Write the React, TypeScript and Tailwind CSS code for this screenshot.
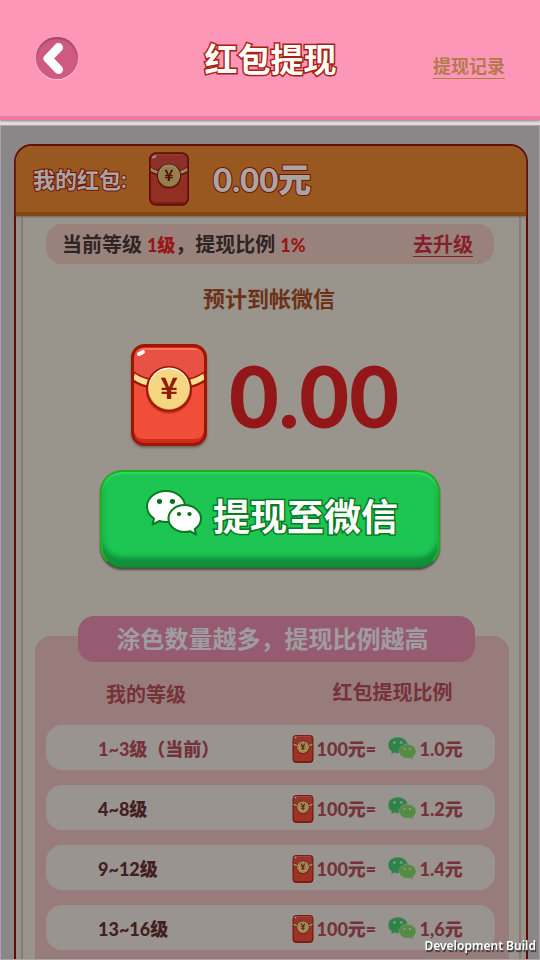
interface IconProps {
  className?: string;
}

interface WechatIconProps extends IconProps {
  back: string;
  front: string;
  eyes: string;
  outline: string;
  outlineWidth: number;
}

interface Tier {
  level: string;
  rate: string;
  current?: boolean;
}

const tiers: Tier[] = [
  { level: "1~3级（当前）", rate: "1.0元", current: true },
  { level: "4~8级", rate: "1.2元" },
  { level: "9~12级", rate: "1.4元" },
  { level: "13~16级", rate: "1,6元" },
];

function RedEnvelope({ className }: IconProps) {
  return (
    <svg viewBox="0 0 76 102" className={className} aria-hidden="true">
      <rect x="1.5" y="1.5" width="73" height="99" rx="12" fill="#cf2c1c" />
      <path d="M3 14Q3 4 13 4H63Q73 4 73 14V85Q73 95 63 95H13Q3 95 3 85Z" fill="#f04e39" />
      <path d="M3 14Q3 4 13 4H63Q73 4 73 14V29Q38 55 3 29Z" fill="#e85245" />
      <path d="M8 6Q10 4 14 4H62Q66 4 68 6Z" fill="#ff7263" />
      <path d="M3 37Q16 45 38 45Q60 45 73 37" fill="none" stroke="#9f1600" strokeWidth="3" />
      <path d="M3 32Q14 41 38 41Q62 41 73 32" fill="none" stroke="#fde193" strokeWidth="6" />
      <path d="M3 28Q14 37 38 37Q62 37 73 28" fill="none" stroke="#9f1600" strokeWidth="1.5" />
      <rect x="1.5" y="1.5" width="73" height="99" rx="12" fill="none" stroke="#9f1600" strokeWidth="3" />
      <path d="M8 10L12 8" stroke="#fff" strokeWidth="4" strokeLinecap="round" />
      <circle cx="38" cy="47" r="23" fill="#8d1a08" opacity="0.4" />
      <circle cx="38" cy="45" r="22" fill="#d08a31" stroke="#9f1600" strokeWidth="2" />
      <circle cx="38" cy="44" r="20.5" fill="#fff" />
      <circle cx="38" cy="45" r="20" fill="#f7d682" />
      <text
        x="38"
        y="55"
        textAnchor="middle"
        fontFamily="Noto Sans CJK SC, sans-serif"
        fontWeight="700"
        fontSize="30"
        fill="#8f1d08"
      >
        ¥
      </text>
    </svg>
  );
}

function WechatIcon({ className, back, front, eyes, outline, outlineWidth }: WechatIconProps) {
  return (
    <svg viewBox="0 0 58 48" className={className} aria-hidden="true">
      <g stroke={outline} strokeWidth={outlineWidth} strokeLinejoin="round">
        <path
          d="M21 2C10.500 2 2 9 2 17.500C2 22.500 4.500 26.500 9 29.500L7.500 35.500L14.500 32C16.500 32.700 18.700 33 21 33C31.500 33 40 26.200 40 17.500C40 9 31.500 2 21 2Z"
          fill={back}
        />
        <path
          d="M39.500 16C30.500 16 23.500 22 23.500 29.500C23.500 37 30.500 43 39.500 43C41.500 43 43.300 42.700 45 42.200L51 45.500L49.700 40C53.700 37.500 56 33.800 56 29.500C56 22 48.500 16 39.500 16Z"
          fill={front}
        />
      </g>
      <g fill={eyes}>
        <ellipse cx="14.500" cy="12.500" rx="2.600" ry="2.400" />
        <ellipse cx="27.500" cy="12.500" rx="2.600" ry="2.400" />
        <ellipse cx="34" cy="25" rx="2.200" ry="2" />
        <ellipse cx="44.500" cy="25" rx="2.200" ry="2" />
      </g>
    </svg>
  );
}

function Header() {
  return (
    <header className="relative z-10 shrink-0 border-b-4 border-[#ea7b9f] bg-[#fd97b8] shadow-[0_1px_2px_#8b8788]">
      <div className="grid h-[116px] grid-cols-[1fr_auto_1fr] items-center pr-[35px] pl-9">
        <button
          type="button"
          aria-label="返回"
          className="flex size-[42px] items-center justify-center rounded-full bg-[#ce5a83] shadow-[inset_0_2px_2px_#984966,0_1px_1px_#ffc4d6]"
        >
          <svg viewBox="0 0 42 42" className="size-full" aria-hidden="true">
            <path
              d="M22.500 10.500L12 21.500L22.500 32.500"
              fill="none"
              stroke="#fff"
              strokeWidth="9"
              strokeLinecap="round"
              strokeLinejoin="round"
            />
          </svg>
        </button>
        <h1 className="pt-1 text-[33px] font-bold text-white [-webkit-text-stroke:3px_#a8200f] [paint-order:stroke]">
          红包提现
        </h1>
        <a
          href="#records"
          className="mt-4 justify-self-end border-b border-[#b08045] text-lg leading-6 font-bold text-[#b5794f]"
        >
          提现记录
        </a>
      </div>
    </header>
  );
}

function BalanceBar() {
  return (
    <div className="relative flex h-[70px] items-center rounded-t-[16px] border-b-4 border-[#854610] bg-[#9a5821] pl-[17px] text-[#aaa5a5] shadow-[0_1px_2px_#6f6a66]">
      <span className="w-[116px] text-[22px] font-bold [-webkit-text-stroke:2px_#731404] [paint-order:stroke]">
        我的红包:
      </span>
      <RedEnvelope className="h-[54px] w-10 brightness-60" />
      <span className="pl-6 text-[33px] leading-10 font-black [-webkit-text-stroke:2px_#731404] [paint-order:stroke]">
        0.00元
      </span>
    </div>
  );
}

function LevelBar() {
  return (
    <div className="mt-2 mr-[25px] ml-[23px] flex h-10 items-center justify-between rounded-[16px] bg-[#98827b] pr-[21px] pl-4 text-xl font-bold text-[#2f2424]">
      <p>
        当前等级 <strong className="text-lg text-[#991616]">1级</strong>，提现比例{" "}
        <strong className="text-lg text-[#991616]">1%</strong>
      </p>
      <a href="#upgrade" className="border-b border-[#851f2b] leading-6 text-[#851f2b]">
        去升级
      </a>
    </div>
  );
}

function TierTable() {
  return (
    <table className="w-full table-fixed border-separate border-spacing-x-0 border-spacing-y-[15px] text-[#76323a]">
      <thead>
        <tr className="h-[33px] text-xl leading-6">
          <th scope="col" className="w-1/2 p-0 pl-[60px] text-left font-bold">
            我的等级
          </th>
          <th scope="col" className="w-1/2 p-0 pb-1 pl-[62px] text-left font-bold">
            红包提现比例
          </th>
        </tr>
      </thead>
      <tbody>
        {tiers.map((tier) => (
          <tr key={tier.level} className="h-[45px] text-lg leading-6 font-black">
            <td
              className={`rounded-l-[16px] bg-[#999490] p-0 pt-0.5 pl-[52px] ${tier.current ? "text-[#76323a]" : "text-[#432020]"}`}
            >
              {tier.level}
            </td>
            <td className="rounded-r-[16px] bg-[#999490] p-0 pt-0.5 pl-[21px]">
              <div className="flex items-center">
                <RedEnvelope className="h-7 w-[22px] brightness-65" />
                <span className="w-[73px] pl-[3px]">100元=</span>
                <WechatIcon
                  className="h-[25px] w-[30px]"
                  back="#2e8348"
                  front="#568b43"
                  eyes="#999490"
                  outline="#999490"
                  outlineWidth={1}
                />
                <span className="pl-[3px]">{tier.rate}</span>
              </div>
            </td>
          </tr>
        ))}
      </tbody>
    </table>
  );
}

export default function App() {
  return (
    <div className="flex h-screen flex-col bg-[#e4d9dd] font-['Lato','Noto_Sans_CJK_SC',sans-serif]">
      <Header />
      <main className="mt-[5px] flex-1 overflow-y-auto border border-[#aaa5a8] bg-[#8b8788] pt-[18px] pr-[11px] pl-[13px] [scrollbar-width:none]">
        <div className="min-h-full rounded-t-[18px] border-x-2 border-t-2 border-[#630c03] bg-[#98928d]">
          <BalanceBar />
          <div className="mx-[5px] border-x-2 border-[#8e7971] bg-[#99948c]">
            <div className="flow-root">
              <LevelBar />
            </div>
            <h2 className="mt-5 pr-1 text-center text-[22px] leading-[30px] font-bold text-[#6c3218]">
              预计到帐微信
            </h2>
            <div className="mt-[30px] flex items-center justify-center gap-[22px] pr-3">
              <RedEnvelope className="h-[102px] w-[76px] drop-shadow-[0_2px_1px_#6f6964]" />
              <span className="text-[86px] leading-[98px] font-black text-[#931718]">0.00</span>
            </div>
            <div className="mt-6 pr-[3px]">
              <button
                type="button"
                className="mx-auto flex h-[98px] w-[340px] max-w-full items-center justify-center gap-2.5 rounded-[22px] border-2 border-[#20ae1b] border-b-[#17822f] bg-[#1dc653] pb-1 pl-1 text-[37px] font-bold text-white shadow-[inset_0_2px_2px_#32da66,inset_0_-9px_5px_#118f3b,0_2px_2px_#514c49]"
              >
                <WechatIcon
                  className="mb-2 h-12 w-[58px]"
                  back="#fff"
                  front="#fff"
                  eyes="#08701d"
                  outline="#0a7a20"
                  outlineWidth={2}
                />
                <span className="[-webkit-text-stroke:3px_#0a7a20] [paint-order:stroke]">提现至微信</span>
              </button>
            </div>
            <section className="mt-[68px] mr-[10px] ml-3 rounded-t-[16px] bg-[#987c7c] pr-[14px] pl-[11px]">
              <div className="flow-root">
                <h2 className="-mt-5 mr-5 ml-8 flex h-[46px] items-center justify-center rounded-[16px] bg-[#965b70] pr-2 text-2xl font-bold text-[#a09da0]">
                  涂色数量越多，提现比例越高
                </h2>
              </div>
              <TierTable />
            </section>
          </div>
        </div>
      </main>
      <div className="fixed right-1 bottom-1 z-20 font-['Noto_Sans',sans-serif] text-xs leading-5 font-semibold text-white [text-shadow:1px_2px_1px_#333]">
        Development Build
      </div>
    </div>
  );
}
